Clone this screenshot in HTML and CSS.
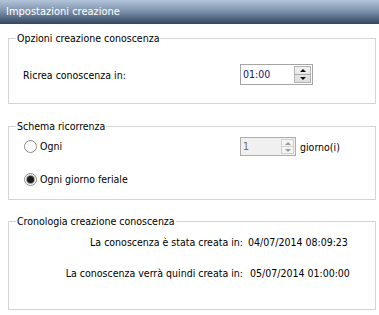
FILE: index.html
```html
<!DOCTYPE html>
<html lang="it">
<head>
    <meta charset="UTF-8">
    <meta name="viewport" content="width=device-width, initial-scale=1.0">
    <title>Impostazioni creazione</title>
    <link rel="stylesheet" href="styles.css">
</head>
<body>
    <div class="window">
        <div class="titlebar">Impostazioni creazione</div>

        <fieldset class="group group-options">
            <legend>Opzioni creazione conoscenza</legend>
            <div class="field-row">
                <label class="field-label">Ricrea conoscenza in:</label>
                <div class="spinbox spinbox-time">
                    <span class="spin-value">01:00</span>
                    <div class="spin-buttons">
                        <span class="spin-btn spin-up"></span>
                        <span class="spin-btn spin-down"></span>
                    </div>
                </div>
            </div>
        </fieldset>

        <fieldset class="group group-recurrence">
            <legend>Schema ricorrenza</legend>
            <div class="field-row">
                <label class="radio"><span class="radio-dot"></span>Ogni</label>
                <div class="spinbox spinbox-days disabled">
                    <span class="spin-value">1</span>
                    <div class="spin-buttons">
                        <span class="spin-btn spin-up"></span>
                        <span class="spin-btn spin-down"></span>
                    </div>
                </div>
                <span class="unit">giorno(i)</span>
            </div>
            <div class="field-row second">
                <label class="radio checked"><span class="radio-dot"></span>Ogni giorno feriale</label>
            </div>
        </fieldset>

        <fieldset class="group group-history">
            <legend>Cronologia creazione conoscenza</legend>
            <div class="history-grid">
                <span class="history-label">La conoscenza è stata creata in:</span>
                <span class="history-value">04/07/2014 08:09:23</span>
                <span class="history-label">La conoscenza verrà quindi creata in:</span>
                <span class="history-value next">05/07/2014 01:00:00</span>
            </div>
        </fieldset>
    </div>
</body>
</html>
```

FILE: styles.css
```css
* {
    margin: 0;
    padding: 0;
    box-sizing: border-box;
}

body {
    background-color: white;
    color: black;
    font-family: "DejaVu Sans Condensed", "Liberation Sans", sans-serif;
    font-size: 10.5px;
}

.window {
    width: 379px;
}

.titlebar {
    height: 24px;
    line-height: 24px;
    padding-left: 6px;
    color: white;
    font-size: 11px;
    background: linear-gradient(to bottom, #b3c5dc 0%, #7f93ad 45%, #4d627d 80%, #34465e 100%);
}

.group {
    margin-left: 8px;
    width: 368px;
    min-width: 0;
    border: 1px solid #d5d5d5;
    padding: 0 7px;
}

.group legend {
    line-height: 13px;
    padding: 0 1px;
}

.group-options {
    margin-top: 8px;
    padding-top: 19px;
    padding-bottom: 18px;
}

.group-recurrence {
    margin-top: 16px;
    padding-top: 4px;
    padding-bottom: 13px;
}

.group-history {
    margin-top: 15px;
    padding-top: 8px;
    padding-bottom: 29px;
}

.field-row {
    display: grid;
    grid-template-columns: 224px auto auto;
    justify-content: start;
    align-items: center;
}

.field-row.second {
    margin-top: 17px;
    height: 13px;
}

.field-label {
    padding-left: 7px;
}

/* Spin boxes */
.spinbox {
    display: flex;
    justify-content: space-between;
    align-items: center;
    border: 1px solid #a5a5a5;
    background-color: white;
    padding: 1px;
}

.spinbox-time {
    width: 73px;
    height: 21px;
}

.spinbox-days {
    width: 56px;
    height: 19px;
}

.spin-value {
    padding-left: 1px;
    line-height: 13px;
}

.spinbox-time .spin-value {
    color: #101078;
}

.spin-buttons {
    display: flex;
    flex-direction: column;
    height: 100%;
    border: 1px solid #b4b4b4;
    background: linear-gradient(to bottom, #f2f2f2, #dcdcdc);
}

.spinbox-time .spin-buttons {
    width: 17px;
}

.spinbox-days .spin-buttons {
    width: 13px;
}

.spin-btn {
    flex: 1;
    display: flex;
    justify-content: center;
    align-items: center;
}

.spin-down {
    border-top: 1px solid #a8a8a8;
}

.spin-up::after,
.spin-down::after {
    content: "";
    width: 0;
    height: 0;
    border-left: 3px solid transparent;
    border-right: 3px solid transparent;
}

.spin-up::after {
    border-bottom: 3px solid #111;
}

.spin-down::after {
    border-top: 3px solid #111;
}

.spinbox.disabled {
    background-color: #f0f0f0;
    border-color: #adadad;
}

.spinbox.disabled .spin-value {
    color: #6d6d6d;
}

.spinbox.disabled .spin-buttons {
    border-color: #d0d0d0;
    background: #f4f4f4;
}

.spinbox.disabled .spin-down {
    border-top-color: #d0d0d0;
}

.spinbox.disabled .spin-up::after {
    border-bottom-color: #9a9a9a;
}

.spinbox.disabled .spin-down::after {
    border-top-color: #9a9a9a;
}

.unit {
    padding-left: 4px;
}

/* Radio buttons */
.radio {
    display: flex;
    align-items: center;
    gap: 3px;
    padding-left: 8px;
    line-height: 13px;
}

.radio-dot {
    width: 13px;
    height: 13px;
    border: 1px solid #8b8b8b;
    border-radius: 50%;
    background-color: white;
    display: flex;
    justify-content: center;
    align-items: center;
}

.radio.checked .radio-dot::after {
    content: "";
    width: 7px;
    height: 7px;
    border-radius: 50%;
    background-color: #1a1a1a;
    box-shadow: 0 0 0 1px #9c9c9c;
}

/* History */
.history-grid {
    display: grid;
    grid-template-columns: 227px auto;
    column-gap: 5px;
    row-gap: 18px;
    line-height: 13px;
}

.history-label {
    text-align: right;
}

.history-value.next {
    padding-left: 2px;
}
```
